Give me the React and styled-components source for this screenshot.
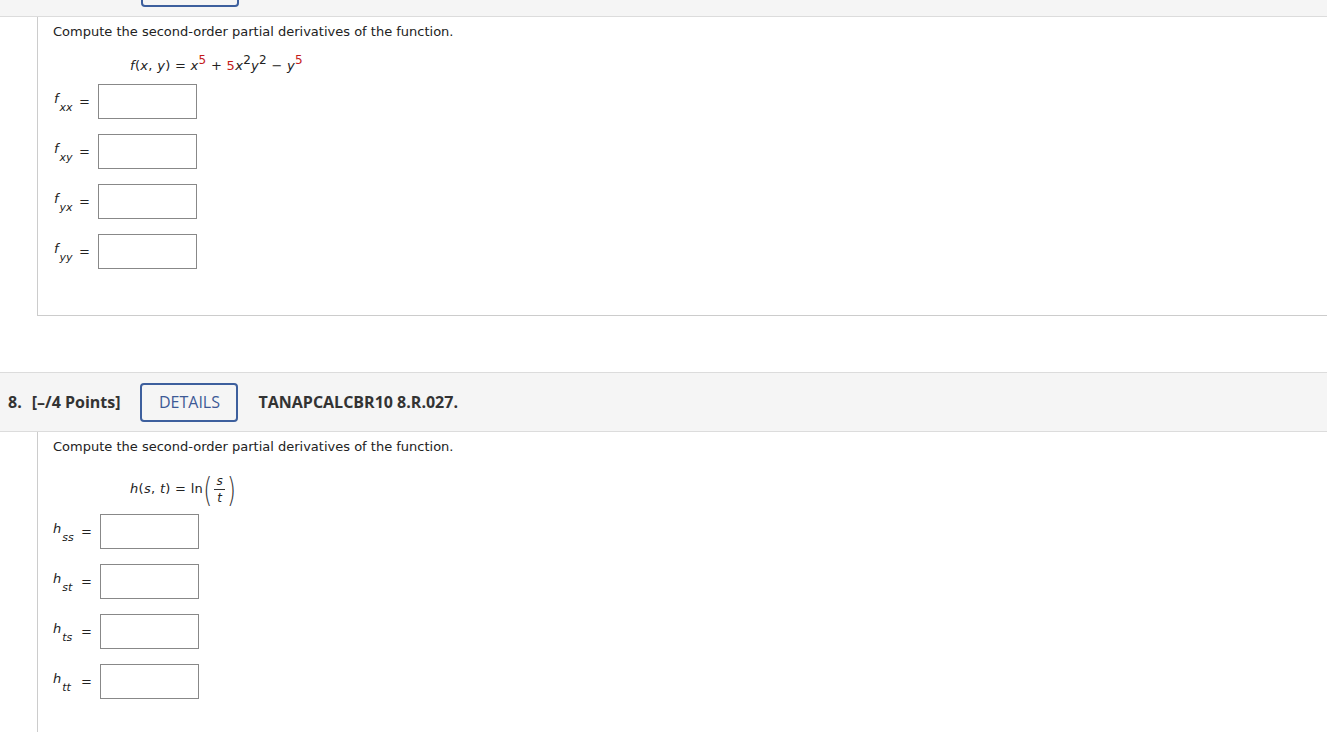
import React from 'react';
import styled, { createGlobalStyle } from 'styled-components';

const GlobalStyle = createGlobalStyle`
  html, body {
    margin: 0;
    padding: 0;
    background: #ffffff;
    overflow: hidden;
  }
  body {
    font-family: "DejaVu Sans", Verdana, sans-serif;
    font-size: 13px;
    color: #222;
  }
`;

const Page = styled.div`
  width: 1327px;
  height: 732px;
  overflow: hidden;
`;

const Header = styled.div`
  display: flex;
  align-items: center;
  gap: 20px;
  box-sizing: border-box;
  height: 60px;
  padding: 0 8px;
  margin-top: ${({ offset }) => offset || 0}px;
  background: #f5f5f5;
  border-top: 1px solid #dcdcdc;
  border-bottom: 1px solid #dcdcdc;
  font-family: "Open Sans", "Liberation Sans", sans-serif;
  font-size: 16px;
`;

const Points = styled.div`
  display: flex;
  gap: 10px;
  font-weight: 700;
  color: #333;
`;

const DetailsButton = styled.button`
  width: 98px;
  height: 39px;
  box-sizing: border-box;
  background: transparent;
  border: 2px solid #3d5f9d;
  border-radius: 4px;
  color: #3d5a96;
  font-family: "Open Sans", "Liberation Sans", sans-serif;
  font-size: 16px;
  padding: 0;
  margin-left: ${({ shift }) => shift || 0}px;
`;

const Code = styled.div`
  font-weight: 700;
  color: #333;
`;

const Panel = styled.div`
  margin-left: 37px;
  padding: 6px 15px ${({ bottom }) => bottom || 0}px;
  border-left: 1px solid #cccccc;
  border-bottom: ${({ open }) => (open ? 'none' : '1px solid #cccccc')};
  margin-bottom: ${({ after }) => after || 0}px;
`;

const Prompt = styled.div`
  line-height: 18px;
`;

const Formula = styled.div`
  line-height: ${({ h }) => h || 18}px;
  height: ${({ h }) => h || 18}px;
  margin-top: ${({ top }) => top || 0}px;
  padding-left: 77px;
  white-space: pre;
  letter-spacing: 0.3px;
`;

const I = styled.span`
  font-style: italic;
`;

const Red = styled.span`
  color: #c41a1a;
`;

const Sup = styled.sup`
  font-size: 12px;
  line-height: 0;
  vertical-align: 6px;
  color: ${({ red }) => (red ? '#c41a1a' : 'inherit')};
`;

const Paren = styled.span`
  display: inline-block;
  vertical-align: middle;
  font-size: 23px;
  font-weight: 200;
  transform: scaleY(1.45);
  line-height: 22px;
  color: #333;
`;

const Frac = styled.span`
  display: inline-flex;
  vertical-align: middle;
  flex-direction: column;
  align-items: center;
  font-style: italic;
  font-size: 12px;
  line-height: 14px;
  margin: 0 2px;
`;

const FracTop = styled.span`
  padding: 0 2px 1px;
  border-bottom: 1px solid #333;
`;

const FracBottom = styled.span`
  padding-top: 1px;
`;

const Rows = styled.div`
  display: flex;
  flex-direction: column;
  gap: 15px;
  margin-top: ${({ top }) => top || 0}px;
`;

const Row = styled.div`
  display: flex;
  align-items: center;
`;

const Label = styled.div`
  display: flex;
  align-items: center;
  width: ${({ w }) => w}px;
  height: 35px;
`;

const Var = styled.span`
  font-style: italic;
  padding-left: ${({ indent }) => indent || 0}px;
  margin-top: -4px;
`;

const Sub = styled.sub`
  font-size: 11px;
  line-height: 0;
  vertical-align: -8px;
  margin-left: 1px;
`;

const Eq = styled.span`
  margin-left: auto;
  margin-right: 8px;
`;

const AnswerBox = styled.div`
  width: 99px;
  height: 35px;
  box-sizing: border-box;
  border: 1px solid #888888;
  background: #fff;
`;

const fRows = ['xx', 'xy', 'yx', 'yy'];
const hRows = ['ss', 'st', 'ts', 'tt'];

const App = () => (
  <Page>
    <GlobalStyle />
    <Header offset={-43}>
      <DetailsButton shift={133} aria-label="details" />
    </Header>
    <Panel bottom={46} after={56}>
      <Prompt>Compute the second-order partial derivatives of the function.</Prompt>
      <Formula top={16}>
        <I>f</I>(<I>x</I>, <I>y</I>) = <I>x</I><Sup red>5</Sup> + <Red>5</Red><I>x</I><Sup>2</Sup><I>y</I><Sup>2</Sup> − <I>y</I><Sup red>5</Sup>
      </Formula>
      <Rows top={9}>
        {fRows.map((s) => (
          <Row key={s}>
            <Label w={45}>
              <Var indent={1}>f<Sub>{s}</Sub></Var>
              <Eq>=</Eq>
            </Label>
            <AnswerBox />
          </Row>
        ))}
      </Rows>
    </Panel>
    <Header>
      <Points>
        <span>8.</span>
        <span>[–/4 Points]</span>
      </Points>
      <DetailsButton>DETAILS</DetailsButton>
      <Code>TANAPCALCBR10 8.R.027.</Code>
    </Header>
    <Panel open bottom={60}>
      <Prompt>Compute the second-order partial derivatives of the function.</Prompt>
      <Formula top={16} h={34}>
        <I>h</I>(<I>s</I>, <I>t</I>) = ln<Paren>(</Paren>
        <Frac>
          <FracTop>s</FracTop>
          <FracBottom>t</FracBottom>
        </Frac>
        <Paren>)</Paren>
      </Formula>
      <Rows top={8}>
        {hRows.map((s) => (
          <Row key={s}>
            <Label w={47}>
              <Var>h<Sub>{s}</Sub></Var>
              <Eq>=</Eq>
            </Label>
            <AnswerBox />
          </Row>
        ))}
      </Rows>
    </Panel>
  </Page>
);

export default App;
